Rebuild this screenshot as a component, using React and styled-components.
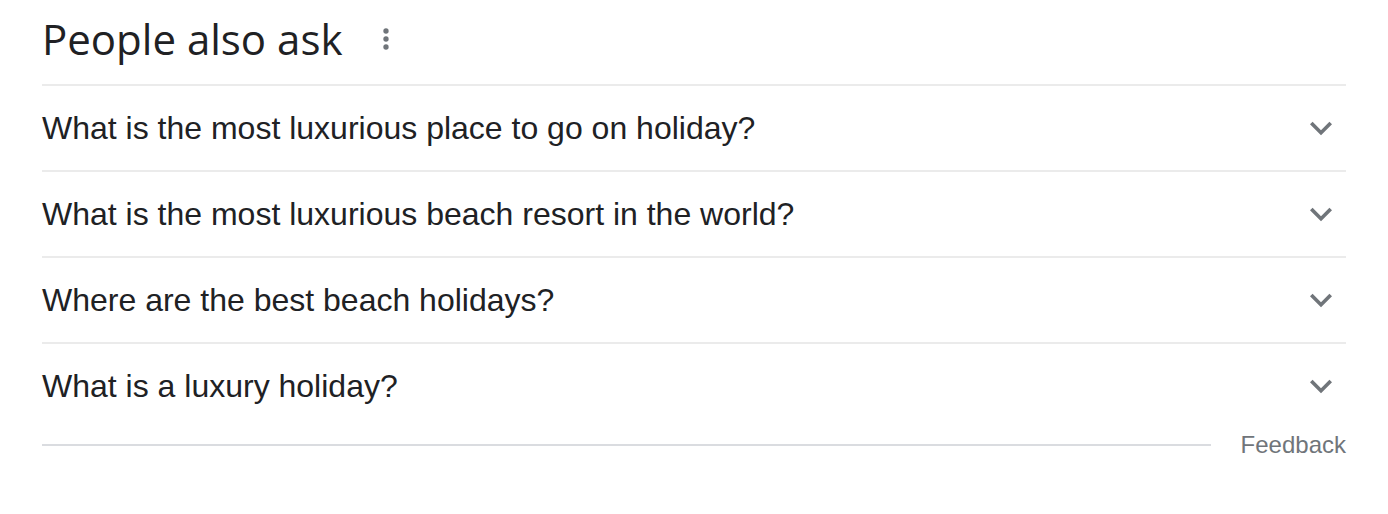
import styled, { createGlobalStyle } from 'styled-components';

const GlobalStyle = createGlobalStyle`
  body {
    margin: 0;
    background: #fff;
    font-family: 'Liberation Sans', Arial, sans-serif;
  }
`;

const Page = styled.div`
  padding: 0 42px;
  width: 1304px;
`;

const Header = styled.div`
  display: flex;
  align-items: center;
  height: 84px;
  border-bottom: 2px solid #ebebeb;
`;

const Title = styled.h2`
  margin: 0 0 6px;
  font-family: 'Open Sans', Roboto, sans-serif;
  font-weight: 400;
  font-size: 42px;
  line-height: 52px;
  color: #202124;
`;

const MenuButton = styled.div`
  display: flex;
  margin: 0 0 6px 28px;
  color: #70757a;
`;

const Row = styled.div`
  display: flex;
  align-items: center;
  justify-content: space-between;
  height: 84px;
  border-bottom: 2px solid #ebebeb;
  &:last-child {
    border-bottom: none;
  }
`;

const Question = styled.div`
  font-size: 32px;
  color: #202124;
  line-height: 44px;
`;

const Chevron = styled.div`
  display: flex;
  margin-right: 3px;
  color: #70757a;
`;

const Footer = styled.div`
  display: flex;
  align-items: center;
  gap: 30px;
  height: 30px;
  margin-top: 2px;
`;

const Line = styled.div`
  flex: 1;
  height: 2px;
  background: #dadce0;
`;

const FeedbackLink = styled.span`
  font-size: 24px;
  color: #70757a;
`;

const questions = [
  'What is the most luxurious place to go on holiday?',
  'What is the most luxurious beach resort in the world?',
  'Where are the best beach holidays?',
  'What is a luxury holiday?',
];

function ExpandIcon() {
  return (
    <svg width='44' height='44' viewBox='0 0 24 24' fill='currentColor'>
      <path d='M16.59 8.59L12 13.17 7.41 8.59 6 10l6 6 6-6z' />
    </svg>
  );
}

function MoreIcon() {
  return (
    <svg width='32' height='32' viewBox='0 0 24 24' fill='currentColor'>
      <circle cx='12' cy='6' r='2' />
      <circle cx='12' cy='12' r='2' />
      <circle cx='12' cy='18' r='2' />
    </svg>
  );
}

export default function App() {
  return (
    <Page>
      <GlobalStyle />
      <Header>
        <Title>People also ask</Title>
        <MenuButton>
          <MoreIcon />
        </MenuButton>
      </Header>
      <div>
        {questions.map((q) => (
          <Row key={q}>
            <Question>{q}</Question>
            <Chevron>
              <ExpandIcon />
            </Chevron>
          </Row>
        ))}
      </div>
      <Footer>
        <Line />
        <FeedbackLink>Feedback</FeedbackLink>
      </Footer>
    </Page>
  );
}
